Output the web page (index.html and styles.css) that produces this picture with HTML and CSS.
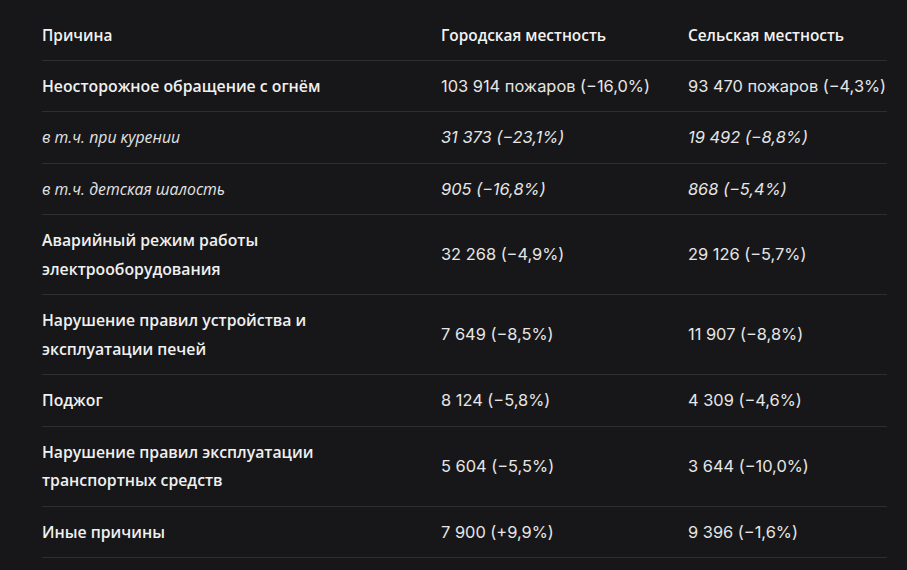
FILE: index.html
```html
<!DOCTYPE html>
<html lang="ru">
<head>
<meta charset="utf-8">
<title>Причины пожаров</title>
<link rel="stylesheet" href="styles.css">
</head>
<body>
<table class="data">
  <colgroup>
    <col class="c1">
    <col class="c2">
    <col class="c3">
  </colgroup>
  <thead>
    <tr>
      <th>Причина</th>
      <th>Городская местность</th>
      <th>Сельская местность</th>
    </tr>
  </thead>
  <tbody>
    <tr>
      <td class="cause">Неосторожное обращение с огнём</td>
      <td class="num">103 914 пожаров (−16,0%)</td>
      <td class="num">93 470 пожаров (−4,3%)</td>
    </tr>
    <tr class="sub">
      <td class="cause">в т.ч. при курении</td>
      <td class="num">31 373 (−23,1%)</td>
      <td class="num">19 492 (−8,8%)</td>
    </tr>
    <tr class="sub">
      <td class="cause">в т.ч. детская шалость</td>
      <td class="num">905 (−16,8%)</td>
      <td class="num">868 (−5,4%)</td>
    </tr>
    <tr>
      <td class="cause">Аварийный режим работы электрооборудования</td>
      <td class="num">32 268 (−4,9%)</td>
      <td class="num">29 126 (−5,7%)</td>
    </tr>
    <tr>
      <td class="cause">Нарушение правил устройства и эксплуатации печей</td>
      <td class="num">7 649 (−8,5%)</td>
      <td class="num">11 907 (−8,8%)</td>
    </tr>
    <tr>
      <td class="cause">Поджог</td>
      <td class="num">8 124 (−5,8%)</td>
      <td class="num">4 309 (−4,6%)</td>
    </tr>
    <tr>
      <td class="cause">Нарушение правил эксплуатации транспортных средств</td>
      <td class="num">5 604 (−5,5%)</td>
      <td class="num">3 644 (−10,0%)</td>
    </tr>
    <tr>
      <td class="cause">Иные причины</td>
      <td class="num">7 900 (+9,9%)</td>
      <td class="num">9 396 (−1,6%)</td>
    </tr>
  </tbody>
</table>
</body>
</html>
```

FILE: styles.css
```css
html, body {
  margin: 0;
  padding: 0;
  background: #171719;
}

body {
  padding: 9px 0 0 42px;
  color: #ececec;
  font-family: "Open Sans", "Noto Sans", sans-serif;
  font-size: 15.8px;
}

.data {
  border-collapse: collapse;
  table-layout: fixed;
  width: 845px;
}

.c1 { width: 399px; }
.c2 { width: 247px; }
.c3 { width: 199px; }

.data th,
.data td {
  text-align: left;
  vertical-align: middle;
  padding: 11px 0;
  line-height: 28.5px;
  border-bottom: 1px solid #2e2e30;
}

.data th {
  padding-top: 12.5px;
  padding-bottom: 9.5px;
  font-size: 15.4px;
  font-weight: 650;
  color: #f2f2f2;
  white-space: nowrap;
}

.data tbody td {
  padding-top: 11px;
  padding-bottom: 11px;
}

.data td.cause {
  font-weight: 600;
  padding-right: 48px;
  color: #f0f0f0;
}

.data td.num {
  font-family: "Inter", "Roboto", sans-serif;
  font-size: 16.4px;
  font-weight: 400;
  white-space: nowrap;
  color: #e6e6e6;
}

.sub td {
  font-style: italic;
}

.sub td.cause {
  font-weight: 400;
  color: #e2e2e2;
}
```
